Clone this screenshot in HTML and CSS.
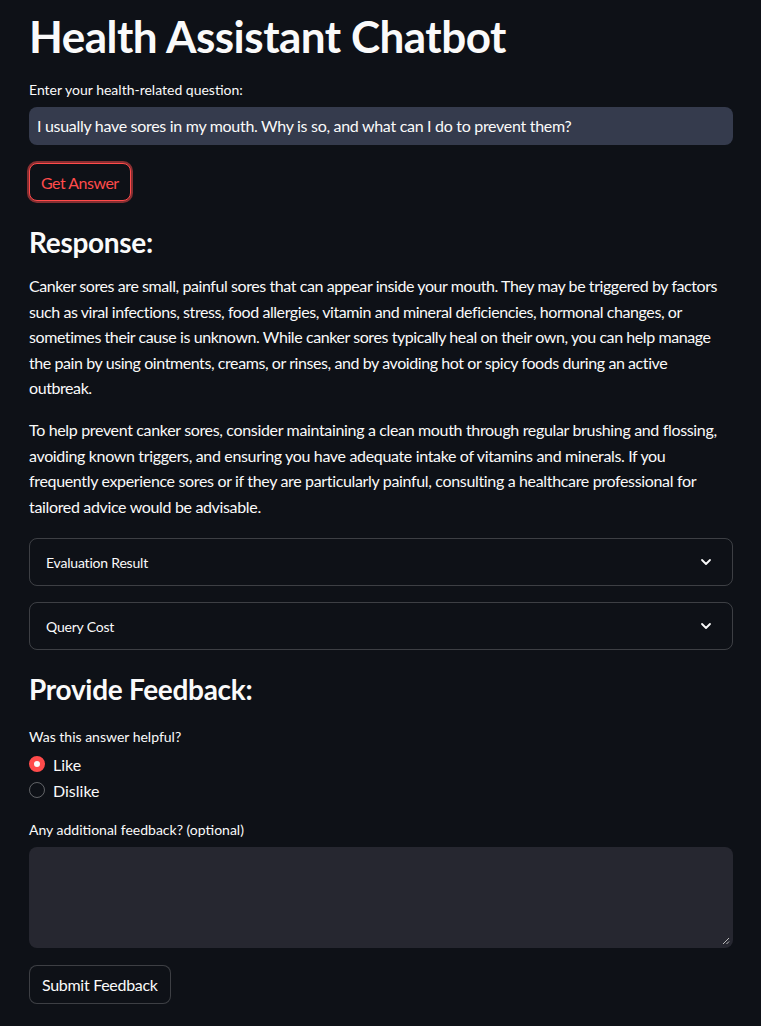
FILE: index.html
```html
<!DOCTYPE html>
<html>
<head>
<meta charset="utf-8">
<link rel="stylesheet" href="styles.css">
</head>
<body>
<main class="main">
  <h1 class="title">Health Assistant Chatbot</h1>
  <div class="field q-field">
    <label class="label">Enter your health-related question:</label>
    <div class="text-input">I usually have sores in my mouth. Why is so, and what can I do to prevent them?</div>
  </div>
  <div class="btn-row"><button class="btn btn-primary-focus">Get Answer</button></div>
  <h3 class="subheader">Response:</h3>
  <div class="markdown">
    <p class="p-tight">Canker sores are small, painful sores that can appear inside your mouth. They may be triggered by factors such as viral infections, stress, food allergies, vitamin and mineral deficiencies, hormonal changes, or sometimes their cause is unknown. While canker sores typically heal on their own, you can help manage the pain by using ointments, creams, or rinses, and by avoiding hot or spicy foods during an active outbreak.</p>
    <p class="p-loose">To help prevent canker sores, consider maintaining a clean mouth through regular brushing and flossing, avoiding known triggers, and ensuring you have adequate intake of vitamins and minerals. If you frequently experience sores or if they are particularly painful, consulting a healthcare professional for tailored advice would be advisable.</p>
  </div>
  <div class="expanders">
    <div class="expander"><span>Evaluation Result</span>
      <svg class="chev" width="16" height="16" viewBox="0 0 16 16"><path d="M4 6l4 4 4-4" fill="none" stroke="#fafafa" stroke-width="1.8" stroke-linecap="round" stroke-linejoin="round"/></svg>
    </div>
    <div class="expander"><span>Query Cost</span>
      <svg class="chev" width="16" height="16" viewBox="0 0 16 16"><path d="M4 6l4 4 4-4" fill="none" stroke="#fafafa" stroke-width="1.8" stroke-linecap="round" stroke-linejoin="round"/></svg>
    </div>
  </div>
  <h3 class="subheader fb">Provide Feedback:</h3>
  <div class="field radio-field">
    <label class="label">Was this answer helpful?</label>
    <div class="radios">
      <div class="radio"><span class="dot on"></span><span>Like</span></div>
      <div class="radio"><span class="dot"></span><span>Dislike</span></div>
    </div>
  </div>
  <div class="field ta-field">
    <label class="label">Any additional feedback? (optional)</label>
    <div class="textarea">
      <svg class="grip" width="8" height="8" viewBox="0 0 8 8"><path d="M7 1L1 7M7 4.5L4.5 7" stroke="#bbb" stroke-width="1"/></svg>
    </div>
  </div>
  <div class="btn-row"><button class="btn btn-secondary">Submit Feedback</button></div>
</main>
</body>
</html>
```
FILE: styles.css
```css
html, body {
  margin: 0;
  padding: 0;
  background: #0e1117;
}
body {
  color: #fafafa;
  font-family: "Lato", "Noto Sans", sans-serif;
  height: 1026px;
  overflow: hidden;
}
.main {
  width: 704px;
  padding: 0 28px 0 29px;
  display: flex;
  flex-direction: column;
}
.title {
  font-size: 44px;
  font-weight: 700;
  line-height: 52px;
  margin: 10px 0 0 0;
  letter-spacing: -0.5px;
}
.field {
  display: flex;
  flex-direction: column;
}
.label {
  font-size: 14px;
  line-height: 20px;
  margin-top: 18px;
  margin-bottom: 7px;
}
.text-input {
  height: 38px;
  box-sizing: border-box;
  background: #353b4d;
  border-radius: 8px;
  font-size: 16px;
  line-height: 38px;
  padding: 0 8px;
  letter-spacing: -0.3px;
}
.btn-row {
  display: flex;
  margin-top: 18px;
}
.btn {
  font-family: inherit;
  font-size: 16px;
  height: 38px;
  padding: 0 12px;
  border-radius: 8px;
  background: #0e1117;
  letter-spacing: -0.3px;
}
.btn-primary-focus {
  color: #ff4b4b;
  border: 1px solid #ff4b4b;
  box-shadow: 0 0 0 2px rgba(255, 75, 75, 0.5);
  padding: 0 11px;
  letter-spacing: -0.5px;
}
.btn-secondary {
  color: #fafafa;
  border: 1px solid rgba(250, 250, 250, 0.2);
  height: 39px;
}
.subheader {
  font-size: 28px;
  font-weight: 700;
  line-height: 34px;
  margin: 24px 0 0 0;
  letter-spacing: -0.3px;
}
.markdown {
  margin-top: 14px;
  font-size: 16px;
  line-height: 25.6px;
}
.markdown p {
  margin: 0 0 16px 0;
}
.markdown .p-tight {
  letter-spacing: -0.42px;
}
.markdown .p-loose {
  letter-spacing: -0.34px;
}
.expanders {
  display: flex;
  flex-direction: column;
  gap: 16px;
  margin-top: 3px;
}
.expander {
  height: 48px;
  box-sizing: border-box;
  border: 1px solid rgba(250, 250, 250, 0.2);
  border-radius: 8px;
  display: flex;
  align-items: center;
  justify-content: space-between;
  padding: 0 18px 0 16px;
  font-size: 14px;
  letter-spacing: -0.2px;
}
.chev {
  display: block;
}
.subheader.fb {
  margin-top: 22px;
}
.radio-field .label {
  margin-top: 21px;
  margin-bottom: 5px;
}
.radios {
  display: flex;
  flex-direction: column;
  gap: 2px;
}
.radio {
  display: flex;
  align-items: center;
  gap: 8px;
  font-size: 16px;
  height: 24px;
}
.dot {
  width: 16px;
  height: 16px;
  box-sizing: border-box;
  border-radius: 50%;
  border: 1px solid rgba(250, 250, 250, 0.35);
}
.dot.on {
  border: 5px solid #ff4b4b;
  background: #fafafa;
}
.ta-field .label {
  margin-top: 18px;
  margin-bottom: 7px;
}
.textarea {
  height: 101px;
  background: #262730;
  border-radius: 8px;
  position: relative;
}
.grip {
  position: absolute;
  right: 3px;
  bottom: 3px;
}
.ta-field + .btn-row {
  margin-top: 17px;
}
```
